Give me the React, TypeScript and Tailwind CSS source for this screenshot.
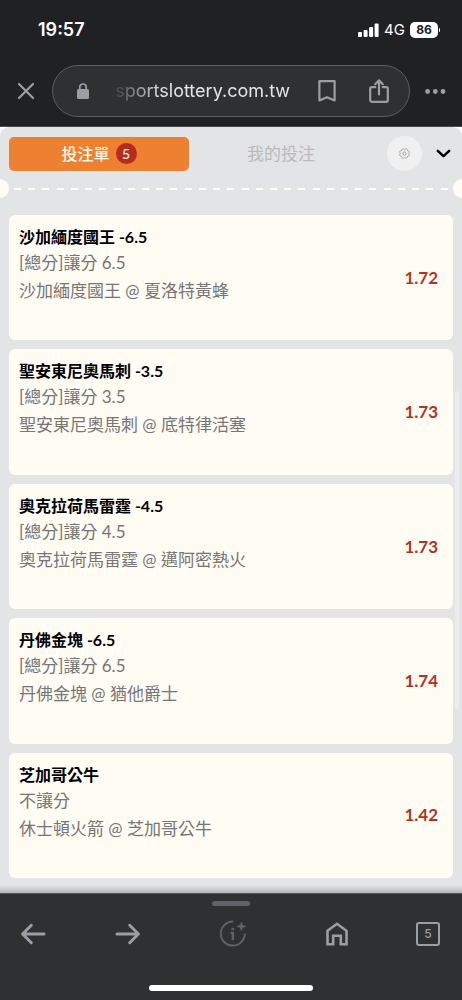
/**
 * Bet slip sheet shown inside the mobile browser
 */

const BETS = [
  { pick: "沙加緬度國王 -6.5", market: "[總分]讓分 6.5", match: "沙加緬度國王 @ 夏洛特黃蜂", odds: "1.72" },
  { pick: "聖安東尼奧馬刺 -3.5", market: "[總分]讓分 3.5", match: "聖安東尼奧馬刺 @ 底特律活塞", odds: "1.73" },
  { pick: "奧克拉荷馬雷霆 -4.5", market: "[總分]讓分 4.5", match: "奧克拉荷馬雷霆 @ 邁阿密熱火", odds: "1.73" },
  { pick: "丹佛金塊 -6.5", market: "[總分]讓分 6.5", match: "丹佛金塊 @ 猶他爵士", odds: "1.74" },
  { pick: "芝加哥公牛", market: "不讓分", match: "休士頓火箭 @ 芝加哥公牛", odds: "1.42" },
];

const DASHES = Array.from({ length: 31 }, (_, i) => i);

function StatusBar() {
  return (
    <div className="flex h-[60px] items-center justify-between pl-[38px] pr-[22px] font-['Inter',sans-serif] text-white">
      <span className="text-[18px] font-semibold leading-6">19:57</span>
      <div className="flex items-center gap-[5px]">
        <svg className="h-[14px] w-[21px]" viewBox="0 0 21 14" fill="currentColor" aria-hidden="true">
          <rect x="0" y="9" width="4" height="5" rx="1" />
          <rect x="5.6" y="7" width="4" height="7" rx="1" />
          <rect x="11.1" y="4" width="4" height="10" rx="1" />
          <rect x="16.6" y="0.5" width="4" height="13.5" rx="1" />
        </svg>
        <span className="text-[15px] leading-5">4G</span>
        <div className="flex items-center gap-px">
          <span className="flex h-4 w-7 items-center justify-center rounded-[5px] bg-white text-[12px] font-bold leading-4 text-[#202123]">
            86
          </span>
          <span className="h-1 w-px rounded-r bg-white" />
        </div>
      </div>
    </div>
  );
}

function AddressBar() {
  return (
    <div className="flex items-center pb-[9px] pl-[17px] pr-4 pt-[5px] text-[#9b9fa4]">
      <button type="button" aria-label="關閉" className="flex h-[18px] w-[18px] items-center justify-center">
        <svg className="h-[18px] w-[18px]" viewBox="0 0 18 18" fill="none" stroke="currentColor" strokeWidth="2.2" strokeLinecap="round">
          <path d="M2 2l14 14M16 2L2 16" />
        </svg>
      </button>
      <div className="ml-[17px] flex h-[52px] min-w-0 flex-1 items-center rounded-full border border-[#5a5d61] bg-[#2f3032] pl-[23px] pr-5">
        <svg className="h-4 w-[14px] shrink-0" viewBox="0 0 14 16" aria-hidden="true">
          <path d="M3.8 7V4.2a3.2 3.2 0 0 1 6.4 0V7" fill="none" stroke="currentColor" strokeWidth="1.7" />
          <rect x="1" y="6" width="12" height="10" rx="1.6" fill="currentColor" />
        </svg>
        <input
          type="text"
          aria-label="網址"
          defaultValue=".sportslottery.com.tw"
          className="ml-5 min-w-0 flex-1 bg-transparent font-['Inter',sans-serif] text-[18px] leading-6 text-[#e4e5e7] outline-none [mask-image:linear-gradient(to_right,transparent,black_52px)]"
        />
        <button type="button" aria-label="書籤" className="ml-[12px] flex h-6 w-[18px] items-center justify-center">
          <svg className="h-[22px] w-[18px]" viewBox="0 0 18 22" fill="none" stroke="currentColor" strokeWidth="2.2">
            <path d="M1.4 1.2h15.2v19.2L9 17.2l-7.6 3.2z" strokeLinejoin="round" />
          </svg>
        </button>
        <button type="button" aria-label="分享" className="ml-[33px] flex h-6 w-5 items-center justify-center">
          <svg className="h-6 w-5" viewBox="0 0 20 24" fill="none" stroke="currentColor" strokeWidth="2.2">
            <path
              d="M6.2 8.2H2.8A1.6 1.6 0 0 0 1.2 9.8v11.4a1.6 1.6 0 0 0 1.6 1.6h14.4a1.6 1.6 0 0 0 1.6-1.6V9.8a1.6 1.6 0 0 0-1.6-1.6h-3.4"
              strokeLinecap="round"
            />
            <path d="M10 15.5V1.5M6.2 5.2L10 1.4l3.8 3.8" strokeLinecap="round" strokeLinejoin="round" />
          </svg>
        </button>
      </div>
      <button type="button" aria-label="更多" className="ml-[15px] flex h-6 w-[21px] items-center justify-center">
        <svg className="h-[5px] w-[21px]" viewBox="0 0 21 5" fill="currentColor">
          <circle cx="2.6" cy="2.5" r="2.4" />
          <circle cx="10.3" cy="2.5" r="2.4" />
          <circle cx="18" cy="2.5" r="2.4" />
        </svg>
      </button>
    </div>
  );
}

function SlipTabs() {
  return (
    <div className="flex items-center pl-[9px] pr-[11px] pt-[9px]">
      <button
        type="button"
        className="flex h-[34px] flex-1 items-center justify-center gap-[6px] rounded-[5px] bg-[#ee8131] text-[16px] font-medium leading-6 text-[#fff6e6]"
      >
        投注單
        <span className="flex h-[21px] w-[21px] items-center justify-center rounded-full bg-[#b52b20] text-[14px] leading-5">
          5
        </span>
      </button>
      <button
        type="button"
        className="ml-[2px] flex h-[34px] flex-1 items-center justify-center text-[17px] leading-6 text-[#b9babb]"
      >
        我的投注
      </button>
      <button
        type="button"
        aria-label="設定"
        className="ml-4 flex h-[35px] w-[35px] items-center justify-center rounded-full bg-[#f0f0f0] text-[#a0a0a0]"
      >
        <svg className="h-[11px] w-[11px]" viewBox="0 0 24 24" fill="none" stroke="currentColor" strokeWidth="2" strokeLinejoin="round">
          <path d="M21 12a3.6 3.6 0 0 1-2.6 6.4A3.6 3.6 0 0 1 12 21a3.6 3.6 0 0 1-6.4-2.6A3.6 3.6 0 0 1 3 12a3.6 3.6 0 0 1 2.6-6.4A3.6 3.6 0 0 1 12 3a3.6 3.6 0 0 1 6.4 2.6A3.6 3.6 0 0 1 21 12z" />
          <circle cx="12" cy="12" r="3.6" />
        </svg>
      </button>
      <button type="button" aria-label="收合" className="ml-[14px] flex h-6 w-[15px] items-center justify-center text-black">
        <svg className="h-[9px] w-[15px]" viewBox="0 0 15 9" fill="none" stroke="currentColor" strokeWidth="2.5" strokeLinecap="round" strokeLinejoin="round">
          <path d="M1.8 1.8l5.7 5.4 5.7-5.4" />
        </svg>
      </button>
    </div>
  );
}

/* Ticket perforation with a half-circle notch on each edge */
function Perforation() {
  return (
    <div className="mt-2 flex h-[19px] items-center overflow-hidden" aria-hidden="true">
      <span className="h-[19px] w-[9px] shrink-0 rounded-r-full bg-[#fffcf4]" />
      <div className="flex flex-1 justify-between px-[5px]">
        {DASHES.map((d) => (
          <span key={d} className="h-[2px] w-[7px] bg-[#fffcf4]" />
        ))}
      </div>
      <span className="h-[19px] w-[9px] shrink-0 rounded-l-full bg-[#fffcf4]" />
    </div>
  );
}

function BottomBar() {
  return (
    <nav className="flex flex-col items-center border-t border-[#55575a] bg-[#2f3032] pb-[9px] pt-[7px] text-[#9b9fa4]">
      <span className="h-[5px] w-[38px] rounded-full bg-[#5f6168]" />
      <div className="mt-[14px] flex w-full items-center justify-between pl-5 pr-[22px]">
        <button type="button" aria-label="上一頁" className="flex h-7 w-[26px] items-center justify-center">
          <svg className="h-[22px] w-[26px]" viewBox="0 0 26 22" fill="none" stroke="currentColor" strokeWidth="3" strokeLinecap="round" strokeLinejoin="round">
            <path d="M24 11H3M11.3 2.3L2.6 11l8.7 8.7" />
          </svg>
        </button>
        <button type="button" aria-label="下一頁" className="flex h-7 w-[26px] items-center justify-center">
          <svg className="h-[22px] w-[26px]" viewBox="0 0 26 22" fill="none" stroke="currentColor" strokeWidth="3" strokeLinecap="round" strokeLinejoin="round">
            <path d="M2 11h21M14.7 2.3l8.7 8.7-8.7 8.7" />
          </svg>
        </button>
        <button type="button" aria-label="網頁資訊" className="flex h-7 w-12 items-center justify-center text-[#5f6168]">
          <svg className="h-7 w-7" viewBox="0 0 28 28" fill="none" stroke="currentColor" strokeWidth="2">
            <path d="M14.2 1.6A12 12 0 1 0 25.8 13.6" />
            <path d="M11.6 12.9h2.3v7" strokeWidth="2.4" />
            <path d="M12.4 9h2.8" strokeWidth="2.4" />
            <path d="M22.4 1.2l1.4 3.8 3.8 1.4-3.8 1.4-1.4 3.8-1.4-3.8-3.8-1.4 3.8-1.4z" fill="currentColor" stroke="none" />
          </svg>
        </button>
        <button type="button" aria-label="首頁" className="flex h-7 w-[22px] items-center justify-center">
          <svg className="h-6 w-[22px]" viewBox="0 0 22 24" fill="none" stroke="currentColor" strokeWidth="2.6">
            <path d="M1.5 8.8L11 1.8l9.500 7v13.400h-5.700v-8.400H7.200v8.400H1.500z" />
          </svg>
        </button>
        <button
          type="button"
          aria-label="分頁"
          className="flex h-6 w-6 items-center justify-center rounded-[3px] border-2 border-current font-['Inter',sans-serif] text-[12px] font-medium leading-4"
        >
          5
        </button>
      </div>
      <span className="mt-[37px] h-[6px] w-[164px] rounded-full bg-white" />
    </nav>
  );
}

export default function App() {
  return (
    <div className="flex min-h-screen flex-col bg-[#202123] font-['Lato','Noto_Sans_CJK_TC',sans-serif]">
      <header className="border-b border-[#4a4b4e]">
        <StatusBar />
        <AddressBar />
      </header>

      <div className="flex flex-1 flex-col bg-white">
        <main className="relative flex flex-1 flex-col rounded-t-[9px] bg-[#e3e4e6]">
          <SlipTabs />
          <Perforation />

          <ul className="flex flex-1 flex-col gap-[9px] px-[9px] pb-[15px] pt-[17px]">
            {BETS.map((bet) => (
              <li
                key={bet.match}
                className="flex flex-1 items-center justify-between rounded-[6px] bg-[#fffcf4] pl-[10px] pr-[15px]"
              >
                <div className="self-stretch pb-8 pt-2">
                  <h3 className="text-[16px] font-bold leading-7 text-black">{bet.pick}</h3>
                  <p className="text-[17px] leading-6 text-[#777674]">{bet.market}</p>
                  <p className="mt-1 text-[17px] leading-6 text-[#777674]">{bet.match}</p>
                </div>
                <span className="text-[17px] font-bold leading-6 text-[#ad3528]">{bet.odds}</span>
              </li>
            ))}
          </ul>

          {/* Scroll thumb */}
          <span className="absolute right-[3px] top-[264px] h-[318px] w-1 rounded-full bg-[#ededef]" />
          {/* Shade above the browser toolbar */}
          <span className="absolute inset-x-0 bottom-0 h-2 bg-linear-to-t from-black/20 to-transparent" />
        </main>
      </div>

      <BottomBar />
    </div>
  );
}
